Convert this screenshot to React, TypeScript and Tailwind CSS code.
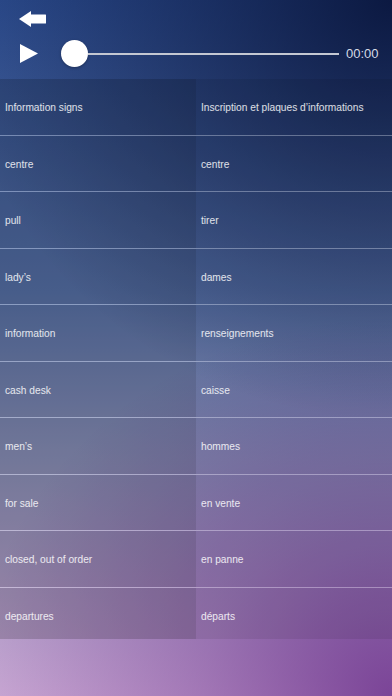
import React from "react";

const rows: [string, string][] = [
  ["Information signs", "Inscription et plaques d’informations"],
  ["centre", "centre"],
  ["pull", "tirer"],
  ["lady’s", "dames"],
  ["information", "renseignements"],
  ["cash desk", "caisse"],
  ["men’s", "hommes"],
  ["for sale", "en vente"],
  ["closed, out of order", "en panne"],
  ["departures", "départs"],
];

function BackArrow() {
  return (
    <svg width="27" height="16" viewBox="0 0 27 16" fill="white">
      <polygon points="0,8 12,0 12,16" />
      <rect x="11" y="3.5" width="16" height="9" rx="0.5" />
    </svg>
  );
}

function PlayIcon() {
  return (
    <svg width="18" height="19" viewBox="0 0 18 19" fill="white">
      <polygon points="0,0 18,9.5 0,19" />
    </svg>
  );
}

export default function App() {
  return (
    <div
      className="flex h-[696px] w-[392px] flex-col overflow-hidden bg-[image:radial-gradient(ellipse_440px_420px_at_top_right,rgba(6,16,52,0.85)_0%,rgba(6,16,52,0.5)_40%,rgba(6,16,52,0)_100%),radial-gradient(ellipse_420px_380px_at_bottom_right,rgba(70,0,110,0.6)_0%,rgba(70,0,110,0.3)_45%,rgba(70,0,110,0)_100%),linear-gradient(to_bottom,#2c4c8e_0%,#5670a6_42%,#8a90b8_66%,#ac9cc6_83%,#cbaad5_100%)]"
      style={{ fontFamily: '"Liberation Sans", Arial, sans-serif' }}
    >
      <div className="flex h-[79px] shrink-0 flex-col">
        <div className="pl-[19px] pt-[11px]">
          <BackArrow />
        </div>
        <div className="mt-[13px] flex items-center">
          <div className="pl-[20px]">
            <PlayIcon />
          </div>
          <div className="ml-[23px] flex flex-1 items-center">
            <div className="h-[27px] w-[27px] shrink-0 rounded-full bg-white shadow-[0_1px_3px_rgba(0,0,0,0.3)]" />
            <div className="h-[2px] flex-1 bg-[#c4c8d2]" />
          </div>
          <div className="w-[53px] pl-[7px] text-[13px] text-[#d6dbe6]">00:00</div>
        </div>
      </div>

      <div className="h-[560px] shrink-0 overflow-hidden">
        {rows.map(([en, fr], i) => (
          <div
            key={i}
            className="grid h-[56.5px] grid-cols-2 border-b border-white/30 text-[10.2px] text-white/85"
          >
            <div className="flex items-center bg-black/[0.17] px-[5px] pt-[2px]">{en}</div>
            <div className="flex items-center bg-black/[0.08] px-[5px] pt-[2px]">{fr}</div>
          </div>
        ))}
      </div>
    </div>
  );
}
